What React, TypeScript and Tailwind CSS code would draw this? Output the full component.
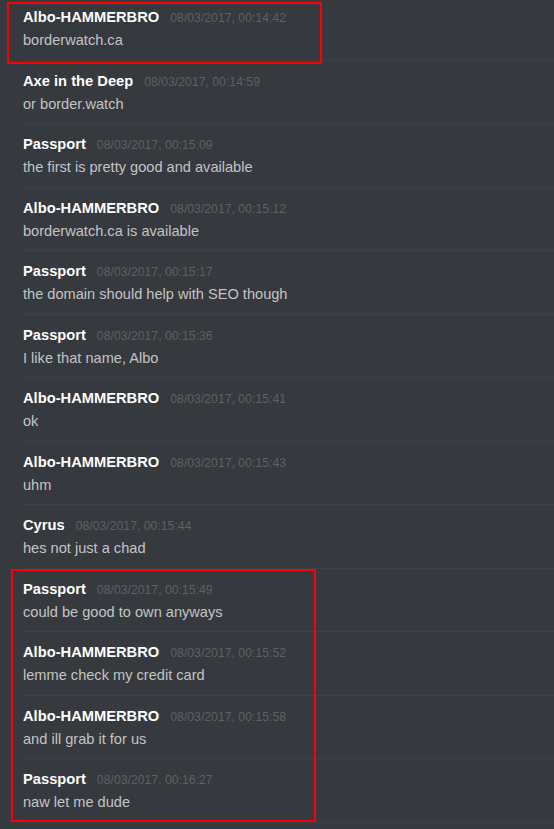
import React from "react";

type Msg = { name: string; time: string; text: string };

const msgs: Msg[] = [
  { name: "Albo-HAMMERBRO", time: "08/03/2017, 00:14:42", text: "borderwatch.ca" },
  { name: "Axe in the Deep", time: "08/03/2017, 00:14:59", text: "or border.watch" },
  { name: "Passport", time: "08/03/2017, 00:15:09", text: "the first is pretty good and available" },
  { name: "Albo-HAMMERBRO", time: "08/03/2017, 00:15:12", text: "borderwatch.ca is available" },
  { name: "Passport", time: "08/03/2017, 00:15:17", text: "the domain should help with SEO though" },
  { name: "Passport", time: "08/03/2017, 00:15:36", text: "I like that name, Albo" },
  { name: "Albo-HAMMERBRO", time: "08/03/2017, 00:15:41", text: "ok" },
  { name: "Albo-HAMMERBRO", time: "08/03/2017, 00:15:43", text: "uhm" },
  { name: "Cyrus", time: "08/03/2017, 00:15:44", text: "hes not just a chad" },
  { name: "Passport", time: "08/03/2017, 00:15:49", text: "could be good to own anyways" },
  { name: "Albo-HAMMERBRO", time: "08/03/2017, 00:15:52", text: "lemme check my credit card" },
  { name: "Albo-HAMMERBRO", time: "08/03/2017, 00:15:58", text: "and ill grab it for us" },
  { name: "Passport", time: "08/03/2017, 00:16:27", text: "naw let me dude" },
];

function Row({ m, i }: { m: Msg; i: number }) {
  const h = i === 0 ? "h-[61px] pt-[7px]" : i % 2 === 1 ? "h-[63px] pt-[10px]" : "h-[64px] pt-[10px]";
  return (
    <div className={`ml-[23px] box-border border-b border-[#3e4146] ${h}`}>
      <div className="flex items-baseline h-[20px] leading-[20px]">
        <span className="text-[14.7px] font-bold text-white">{m.name}</span>
        <span className="ml-[11px] text-[12.25px] text-[#5e6165]">{m.time}</span>
      </div>
      <div className="mt-[3px] h-[20px] leading-[20px] text-[14.6px] text-[#c3c4c4]">{m.text}</div>
    </div>
  );
}

export default function App() {
  return (
    <div
      className="relative w-[554px] h-[829px] overflow-hidden bg-[#36393e]"
      style={{ fontFamily: '"Liberation Sans", Arial, sans-serif' }}
    >
      {msgs.map((m, i) => (
        <Row key={i} m={m} i={i} />
      ))}
      <div className="absolute left-[7px] top-[2px] w-[315px] h-[62px] border-2 border-[#ff0000]" />
      <div className="absolute left-[11px] top-[569px] w-[305px] h-[253px] border-2 border-[#ff0000]" />
    </div>
  );
}
